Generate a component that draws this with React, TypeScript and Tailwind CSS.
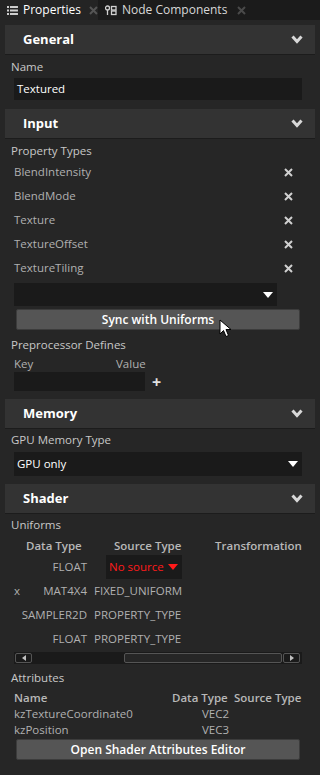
const font = { fontFamily: '"Open Sans", "Noto Sans", sans-serif' };

function Chevron() {
    return (
        <svg width="12" height="9" viewBox="0 0 12 9" className="text-[#d8d8d8]">
            <polyline points="1.5,1.5 6,6.5 10.5,1.5" fill="none" stroke="currentColor" strokeWidth="3" />
        </svg>
    );
}

function Tri({ className = "text-white" }: { className?: string }) {
    return (
        <svg width="10" height="6" viewBox="0 0 10 6" className={className}>
            <polygon points="0,0 10,0 5,6" fill="currentColor" />
        </svg>
    );
}

function Cross({ className = "text-[#d0d0d0]" }: { className?: string }) {
    return (
        <svg width="9" height="9" viewBox="0 0 9 9" className={className}>
            <path d="M1 1 L8 8 M8 1 L1 8" stroke="currentColor" strokeWidth="2" />
        </svg>
    );
}

function Header({ title, className = "" }: { title: string; className?: string }) {
    return (
        <div className={"mx-[5px] h-[30px] flex items-center justify-between pl-[18px] pr-[12px] bg-[#333333] border-b border-[#1c1c1c] " + className}>
            <span className="text-[13px] font-bold text-white">{title}</span>
            <Chevron />
        </div>
    );
}

function Button({ label, className = "" }: { label: string; className?: string }) {
    return (
        <div className={"mx-[16px] mr-[20px] h-[21px] flex items-center justify-center bg-[#555555] border border-[#3c3c3c] rounded-[2px] text-[12px] font-semibold text-white " + className}>
            {label}
        </div>
    );
}

const props = ["BlendIntensity", "BlendMode", "Texture", "TextureOffset", "TextureTiling"];

const uniforms = [
    { x: "", type: "FLOAT", src: null as string | null },
    { x: "x", type: "MAT4X4", src: "FIXED_UNIFORM" },
    { x: "", type: "SAMPLER2D", src: "PROPERTY_TYPE" },
    { x: "", type: "FLOAT", src: "PROPERTY_TYPE" },
];

export default function App() {
    return (
        <div style={font} className="w-[320px] h-[775px] bg-[#262626] text-[11.5px] text-[#c8c8c8] overflow-hidden">
            {/* Tabs */}
            <div className="h-[20px] flex bg-[#1b1b1b]">
                <div className="w-[98px] flex items-center bg-[#242424] pl-[7px]">
                    <svg width="11" height="9" viewBox="0 0 11 9" className="text-[#d0d0d0]">
                        <rect x="0" y="0" width="2" height="2" fill="currentColor" />
                        <rect x="3" y="0" width="8" height="2" fill="currentColor" />
                        <rect x="0" y="3.5" width="2" height="2" fill="currentColor" />
                        <rect x="3" y="3.5" width="8" height="2" fill="currentColor" />
                        <rect x="0" y="7" width="2" height="2" fill="currentColor" />
                        <rect x="3" y="7" width="8" height="2" fill="currentColor" />
                    </svg>
                    <span className="ml-[5px] text-[12px] text-white">Properties</span>
                    <Cross className="ml-[8px] text-[#555555]" />
                </div>
                <div className="flex items-center pl-[7px]">
                    <svg width="12" height="11" viewBox="0 0 12 11" className="text-[#d0d0d0]">
                        <circle cx="2.5" cy="3" r="2" fill="none" stroke="currentColor" strokeWidth="1.3" />
                        <line x1="2.5" y1="5" x2="2.5" y2="10" stroke="currentColor" strokeWidth="1.3" />
                        <rect x="6.5" y="1.5" width="4.5" height="3.5" fill="none" stroke="currentColor" strokeWidth="1.3" />
                        <rect x="6.5" y="6" width="4.5" height="3.5" fill="none" stroke="currentColor" strokeWidth="1.3" />
                    </svg>
                    <span className="ml-[5px] text-[12px] text-[#d8d8d8]">Node Components</span>
                    <Cross className="ml-[10px] text-[#4a4a4a]" />
                </div>
            </div>

            {/* General */}
            <Header title="General" className="mt-[5px]" />
            <div className="h-[18px] mt-[3px] flex items-center pl-[11px]">Name</div>
            <div className="mt-[2px] mx-[14px] mr-[18px] h-[22px] bg-[#1a1a1a] flex items-center pl-[3px] text-white">Textured</div>

            {/* Input */}
            <Header title="Input" className="mt-[9px]" />
            <div className="h-[18px] mt-[3px] flex items-center pl-[11px]">Property Types</div>
            <div className="flex flex-col">
                {props.map((p) => (
                    <div key={p} className="h-[24px] flex items-center justify-between pl-[14px] pr-[27px] text-[#b0b0b0]">
                        <span>{p}</span>
                        <Cross />
                    </div>
                ))}
            </div>
            <div className="mt-[3px] ml-[14px] w-[263px] h-[23px] bg-[#1a1a1a] flex items-center justify-end pr-[4px]">
                <Tri />
            </div>
            <div className="relative">
                <Button label="Sync with Uniforms" className="mt-[3px]" />
                <svg width="14" height="20" viewBox="0 0 14 20" className="absolute left-[219px] top-[10px]">
                    <path d="M1 1 L1 15 L4.5 11.5 L7 17.5 L9.5 16.5 L7 10.5 L12 10.5 Z" fill="white" stroke="black" strokeWidth="1" />
                </svg>
            </div>

            <div className="h-[18px] mt-[6px] flex items-center pl-[11px]">Preprocessor Defines</div>
            <div className="h-[16px] mt-[2px] flex items-center text-[#b0b0b0]">
                <span className="ml-[14px] w-[102px]">Key</span>
                <span>Value</span>
            </div>
            <div className="flex items-center">
                <div className="ml-[14px] w-[131px] h-[19px] bg-[#1a1a1a]" />
                <span className="ml-[7px] text-[16px] font-bold text-[#e0e0e0] leading-none">+</span>
            </div>

            {/* Memory */}
            <Header title="Memory" className="mt-[8px]" />
            <div className="h-[18px] mt-[2px] flex items-center pl-[11px]">GPU Memory Type</div>
            <div className="mt-[3px] mx-[14px] mr-[18px] h-[24px] bg-[#1a1a1a] flex items-center justify-between pl-[3px] pr-[4px] text-white">
                <span>GPU only</span>
                <Tri />
            </div>

            {/* Shader */}
            <Header title="Shader" className="mt-[8px]" />
            <div className="h-[18px] mt-[2px] flex items-center pl-[11px]">Uniforms</div>
            <div className="h-[18px] mt-[3px] flex items-center font-semibold text-[#b8b8b8] whitespace-nowrap">
                <span className="ml-[26px] w-[88px]">Data Type</span>
                <span className="w-[101px]">Source Type</span>
                <span>Transformation</span>
            </div>
            <div className="flex flex-col text-[#b0b0b0] whitespace-nowrap">
                {uniforms.map((u, i) => (
                    <div key={i} className="h-[24px] flex items-center">
                        <span className="w-[20px] pl-[14px]">{u.x}</span>
                        <span className="w-[67px] text-right">{u.type}</span>
                        {u.src ? (
                            <span className="ml-[7px]">{u.src}</span>
                        ) : (
                            <div className="ml-[19px] w-[76px] h-[24px] bg-[#1a1a1a] flex items-center justify-between pl-[3px] pr-[4px] text-[#ff1a1a]">
                                <span>No source</span>
                                <Tri className="text-[#ff1a1a]" />
                            </div>
                        )}
                    </div>
                ))}
            </div>
            {/* horizontal scrollbar */}
            <div className="mt-[1px] mx-[14px] mr-[18px] h-[12px] bg-[#1a1a1a] flex items-center">
                <div className="ml-[1px] w-[17px] h-[10px] border border-[#555] rounded-[2px] flex items-center justify-center">
                    <svg width="4" height="6" viewBox="0 0 4 6"><polygon points="4,0 4,6 0,3" fill="#c0c0c0" /></svg>
                </div>
                <div className="ml-[92px] w-[158px] h-[10px] border border-[#555] rounded-[2px] bg-[#262626]" />
                <div className="ml-[1px] w-[17px] h-[10px] border border-[#555] rounded-[2px] flex items-center justify-center">
                    <svg width="4" height="6" viewBox="0 0 4 6"><polygon points="0,0 0,6 4,3" fill="#c0c0c0" /></svg>
                </div>
            </div>

            <div className="h-[18px] mt-[5px] flex items-center pl-[11px]">Attributes</div>
            <div className="h-[16px] mt-[3px] flex items-center font-semibold text-[#b8b8b8] whitespace-nowrap">
                <span className="ml-[14px] w-[158px]">Name</span>
                <span className="w-[62px]">Data Type</span>
                <span>Source Type</span>
            </div>
            <div className="h-[16px] flex items-center text-[#b0b0b0]">
                <span className="ml-[14px] w-[188px]">kzTextureCoordinate0</span>
                <span>VEC2</span>
            </div>
            <div className="h-[16px] flex items-center text-[#b0b0b0]">
                <span className="ml-[14px] w-[188px]">kzPosition</span>
                <span>VEC3</span>
            </div>
            <Button label="Open Shader Attributes Editor" className="mt-[1px]" />
        </div>
    );
}
